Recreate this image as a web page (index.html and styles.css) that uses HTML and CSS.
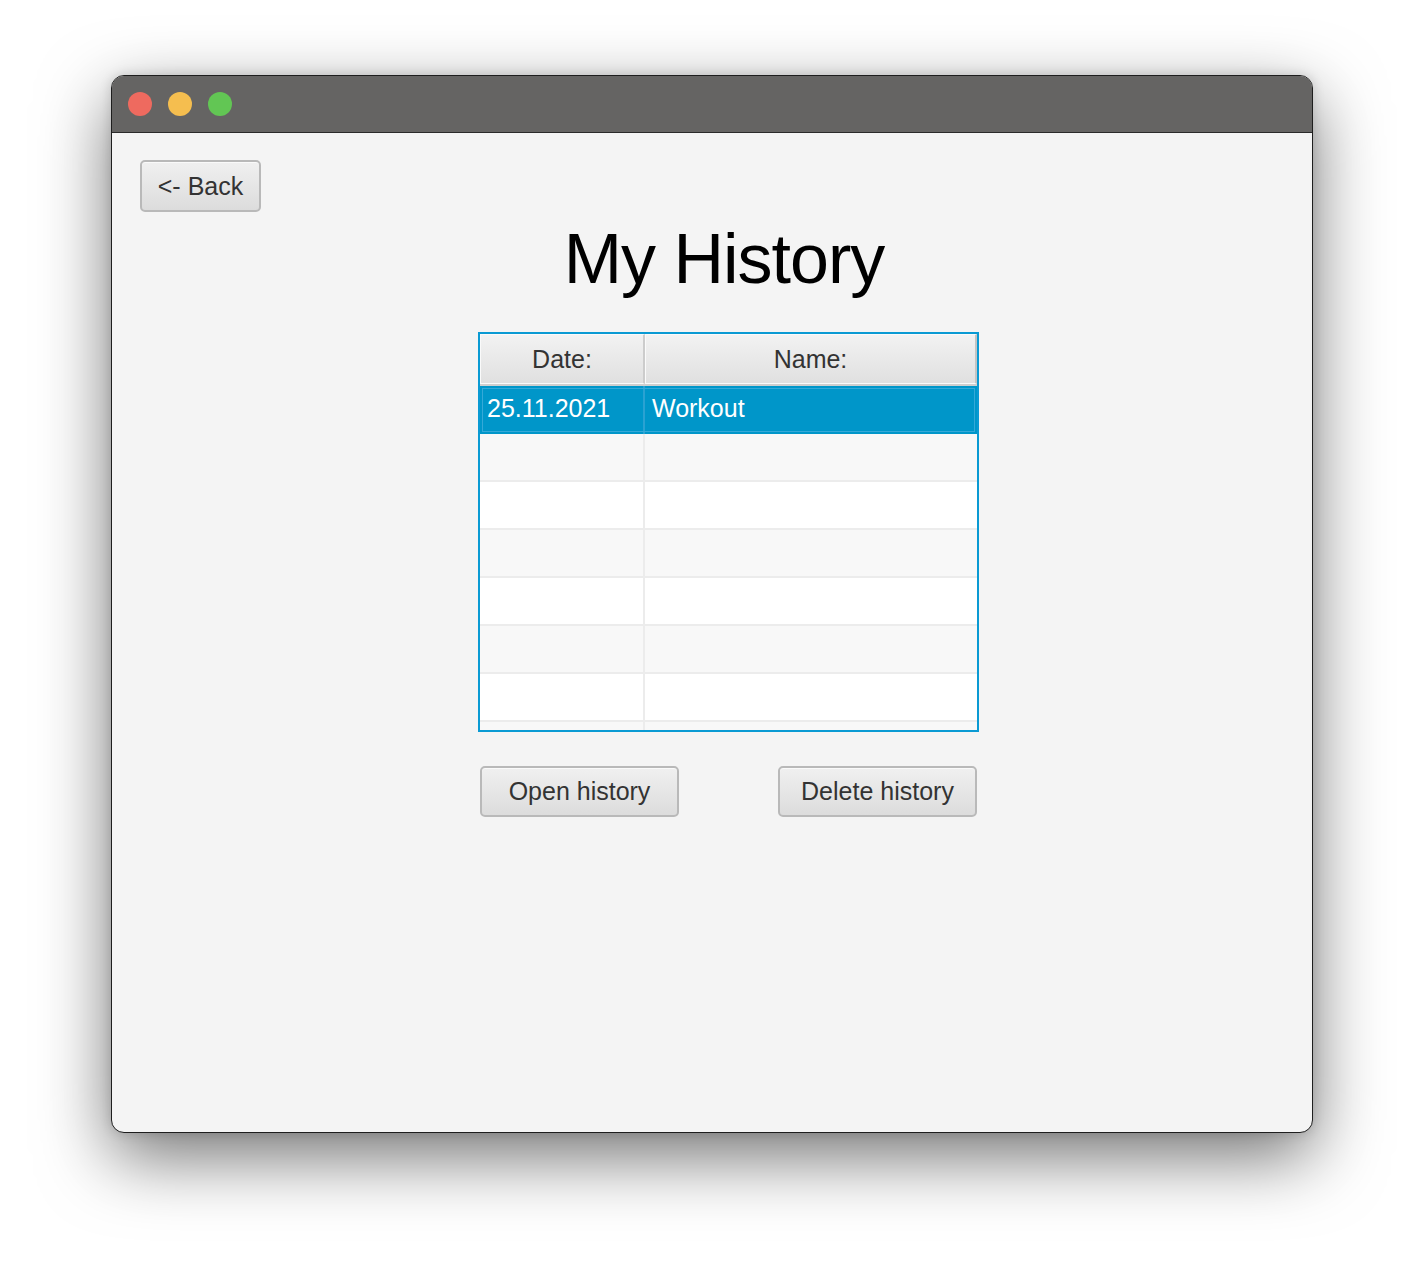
FILE: index.html
```html
<!DOCTYPE html>
<html>
<head>
<meta charset="utf-8">
<link rel="stylesheet" href="styles.css">
</head>
<body>
<div class="stage">
  <div class="window">
    <div class="titlebar">
      <span class="light red"></span>
      <span class="light yellow"></span>
      <span class="light green"></span>
    </div>
    <div class="content">
      <button class="btn back">&lt;- Back</button>
      <h1 class="title">My History</h1>
      <div class="table">
        <div class="thead">
          <div class="th col1">Date:</div>
          <div class="th col2">Name:</div>
        </div>
        <div class="tbody">
          <div class="row selected"><div class="td col1">25.11.2021</div><div class="td col2">Workout</div></div>
          <div class="row odd"><div class="td col1"></div><div class="td col2"></div></div>
          <div class="row"><div class="td col1"></div><div class="td col2"></div></div>
          <div class="row odd"><div class="td col1"></div><div class="td col2"></div></div>
          <div class="row"><div class="td col1"></div><div class="td col2"></div></div>
          <div class="row odd"><div class="td col1"></div><div class="td col2"></div></div>
          <div class="row"><div class="td col1"></div><div class="td col2"></div></div>
          <div class="row odd"><div class="td col1"></div><div class="td col2"></div></div>
        </div>
      </div>
      <div class="actions">
        <button class="btn action">Open history</button>
        <button class="btn action">Delete history</button>
      </div>
    </div>
  </div>
</div>
</body>
</html>
```

FILE: styles.css
```css
html, body {
  margin: 0;
  padding: 0;
  background: #ffffff;
  font-family: "Liberation Sans", Arial, sans-serif;
}

.stage {
  width: 1424px;
  height: 1280px;
  padding: 75px 0 0 111px;
  box-sizing: border-box;
  overflow: hidden;
}

.window {
  width: 1202px;
  height: 1058px;
  box-sizing: border-box;
  border: 1px solid #1e1e1e;
  border-radius: 13px;
  background: #f4f4f4;
  overflow: hidden;
  box-shadow: 0 24px 70px rgba(0, 0, 0, 0.55), 0 0 12px rgba(0, 0, 0, 0.15);
  display: flex;
  flex-direction: column;
}

.titlebar {
  height: 56px;
  background: #656463;
  border-bottom: 1px solid #2a2a2a;
  display: flex;
  align-items: center;
  gap: 16px;
  padding-left: 16px;
  flex-shrink: 0;
}

.light {
  width: 24px;
  height: 24px;
  border-radius: 50%;
  display: block;
}
.red { background: #ee6a5f; }
.yellow { background: #f5be4f; }
.green { background: #62c654; }

.content {
  flex: 1;
  padding: 27px 0 0 28px;
  display: flex;
  flex-direction: column;
  align-items: flex-start;
}

.btn {
  font-family: "Liberation Sans", Arial, sans-serif;
  font-size: 25px;
  color: #333333;
  background: linear-gradient(#f0f0f0, #dcdcdc);
  border: 2px solid #b9b9b9;
  border-radius: 5px;
  box-shadow: inset 0 1px 0 #fafafa;
  padding: 0;
  box-sizing: border-box;
}

.back {
  width: 121px;
  height: 52px;
}

.title {
  align-self: stretch;
  margin: 7px 0 0 -4px;
  text-align: center;
  font-size: 70px;
  line-height: 80px;
  font-weight: normal;
  letter-spacing: -1px;
  color: #000000;
}

.table {
  margin: 33px 0 0 338px;
  width: 501px;
  height: 400px;
  box-sizing: border-box;
  border: 2px solid #0a9ad3;
  background: #ffffff;
  overflow: hidden;
}

.thead {
  display: flex;
  height: 52px;
  box-sizing: border-box;
  border-bottom: 2px solid #cfcfcf;
}

.th {
  background: linear-gradient(#f2f2f2, #e0e0e0);
  border: 1px solid #fafafa;
  border-right: 2px solid #cccccc;
  box-sizing: border-box;
  display: flex;
  align-items: center;
  justify-content: center;
  font-size: 25px;
  color: #333333;
}
.th.col2 { border-right: 2px solid #c4c4c4; }

.col1 { width: 165px; flex-shrink: 0; }
.col2 { flex: 1; }

.row {
  display: flex;
  height: 48px;
  box-sizing: border-box;
  border-bottom: 2px solid #ececec;
  background: #ffffff;
}
.row.odd { background: #f8f8f8; }

.td {
  box-sizing: border-box;
  border-right: 2px solid #ececec;
  display: flex;
  align-items: center;
  padding-left: 7px;
  padding-bottom: 3px;
  font-size: 25px;
  color: #ffffff;
}
.td.col2 { border-right: none; }

.row.selected {
  background: #0096c9;
  border-bottom: none;
  outline: 1px solid #35a9d8;
  outline-offset: -3px;
}
.row.selected .td { border-right-color: #2aa2d2; }

.actions {
  margin: 34px 0 0 340px;
  display: flex;
  gap: 99px;
}

.action {
  width: 199px;
  height: 51px;
}
```
